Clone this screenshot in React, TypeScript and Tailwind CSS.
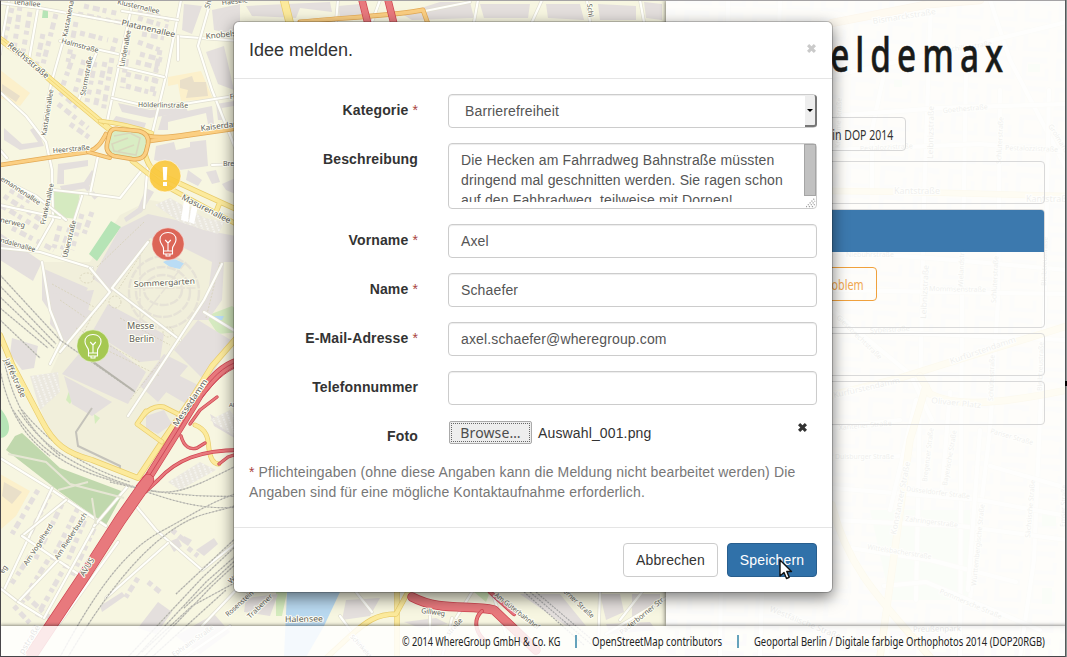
import React from "react";

type Label = [text: string, x: number, y: number, rotate: number, size?: number, length?: number];

const detached = [
  "M12 8 L4 42", "M20 6 L14 50", "M30 12 L22 58", "M43 34 L36 66", "M56 14 L42 68", "M78 14 L122 23", "M84 6 L120 14",
  "M76 22 L68 62", "M80 33 L108 40", "M74 54 L62 88", "M84 60 L74 96", "M95 62 L87 102", "M105 62 L95 108",
  "M112 58 L103 112", "M116 38 L112 52", "M128 50 L122 88", "M138 42 L160 50", "M140 54 L162 60", "M136 62 L160 68",
  "M126 74 L160 82", "M126 86 L156 94", "M160 50 L152 92", "M138 10 L170 20", "M138 18 L168 27", "M142 34 L164 38",
  "M60 92 L80 110", "M58 104 L88 128", "M70 124 L90 138", "M4 196 L44 222", "M2 206 L38 228", "M12 228 L54 250",
  "M60 226 L54 248", "M70 228 L62 250", "M82 214 L72 250", "M92 212 L84 234", "M86 186 L98 200", "M10 190 L34 204",
  "M38 490 L12 534", "M50 494 L28 538", "M62 504 L34 562", "M78 508 L52 560", "M88 512 L64 570", "M98 520 L72 576",
  "M30 556 L10 586", "M48 560 L22 602", "M62 572 L36 618", "M14 606 L40 634", "M26 596 L52 620",
  "M148 582 L160 592", "M138 578 L124 600", "M172 530 L186 542", "M188 548 L198 556",
];

const blocks = [
  "M206 52 L224 46 L234 90 L218 84Z", "M212 10 L240 4 L240 36 L214 30Z", "M184 4 L202 6 L192 34 L182 30Z",
  "M118 103 L150 110 L186 107 L188 112 L150 118 L122 112Z", "M162 116 L212 106 L214 124 L208 124 L206 113 L168 122 L168 130 L158 130Z",
  "M116 116 L146 123 L144 129 L112 122Z", "M218 120 L216 104 L240 100 L240 105 L222 108 L224 120Z",
  "M156 146 L174 142 L176 150 L190 147 L190 142 L206 140 L208 166 L180 170 L168 164 L154 160Z",
  "M58 164 L88 160 L88 166 L64 170 L64 184 L57 184Z", "M60 186 L84 182 L92 170 L96 174 L88 188 L62 192Z",
  "M4 128 L22 144 L38 142 L30 130 L36 126 L44 146 L20 150 L4 140Z", "M188 170 L202 180 L198 186 L186 180Z",
  "M206 172 L216 170 L220 182 L212 184Z", "M222 184 L240 176 L240 196 L226 190Z", "M146 188 L154 192 L142 212 L126 222 L124 218 L138 208Z",
  "M0 233 L42 262 L33 281 L0 260Z", "M120 228 L148 214 L176 220 L204 230 L236 236 L240 262 L224 262 L222 300 L208 320 L190 320 L208 294 L212 262 L184 248 L150 238 L144 248 L112 292 L92 278Z",
  "M42 268 L88 288 L78 306 L94 312 L68 334 L50 312 L42 300Z", "M52 294 L94 290 L84 324 L66 342 L50 324Z",
  "M108 304 L164 334 L160 360 L140 362 L92 332Z", "M198 320 L234 342 L206 382 L174 350Z", "M82 350 L110 344 L146 372 L128 404 L62 374Z",
  "M12 338 L38 346 L34 368 L22 370 L10 354Z", "M164 354 L188 366 L158 402 L140 386Z", "M64 376 L112 402 L92 416 L72 404Z",
  "M172 372 L200 386 L190 406 L166 392Z", "M158 602 L172 612 L156 634 L138 628Z", "M100 606 L122 592 L125 596 L102 612Z",
  "M168 542 L178 538 L182 546 L174 552Z", "M184 536 L192 540 L188 546 L182 542Z", "M196 550 L214 538 L218 544 L204 556Z",
  "M210 414 L240 432 L238 440 L214 426Z", "M146 416 L164 410 L172 424 L158 434 L146 428Z",
  "M246 6 L330 2 L332 12 L300 8 L296 18 L252 16Z", "M338 6 L360 4 L362 16 L340 18Z", "M402 14 L440 2 L470 2 L474 18 L412 20Z",
  "M480 4 L530 4 L528 18 L484 18Z", "M546 4 L580 4 L584 20 L548 18Z", "M598 4 L636 6 L636 20 L600 20Z", "M644 2 L662 4 L662 20 L646 18Z",
  "M246 598 L278 594 L270 616 L244 612Z", "M346 600 L380 598 L370 616 L342 620Z", "M404 622 L436 618 L448 624 L420 628Z",
  "M520 594 L560 594 L586 626 L566 626Z", "M600 594 L620 594 L624 612 L606 620Z", "M632 594 L660 594 L660 604 L632 618Z",
  "M606 624 L650 622 L656 630 L610 634Z", "M176 636 L214 614 L230 632 L200 654Z",
];

const streets = [
  "M9 0 L2 40 L0 54", "M38 8 L29 60", "M73 0 L62 45 L51 84 L42 137", "M0 3 L40 8 L122 23 L174 36 L240 41",
  "M60 41 L118 54", "M96 54 L77 104", "M133 0 L107 122", "M181 0 L166 76 L152 134", "M211 0 L198 46 L212 90 L240 160",
  "M118 66 L164 77", "M112 98 L150 107 L190 103 L240 95", "M178 36 L178 60", "M122 11 L178 20", "M0 92 L26 116 L46 142 L52 170 L53 220 L36 250",
  "M0 150 L7 158", "M0 178 L36 196 L66 220", "M98 156 L90 194 L54 190", "M90 194 L120 198 L142 170", "M82 196 L62 258",
  "M0 205 L60 218", "M0 248 L40 252 L92 268", "M148 162 L144 208", "M240 164 L212 165", "M42 262 L50 310 L62 340 L50 364",
  "M90 268 L110 292 L60 352", "M148 242 L112 288 L180 340", "M222 264 L204 300 L178 340 L128 416", "M204 312 L240 334",
  "M0 458 L52 490 L106 526", "M52 488 L4 590", "M66 500 L22 536", "M22 536 L78 574", "M58 560 L18 602 L0 588", "M18 602 L44 618",
  "M98 520 L44 618", "M128 486 L94 526", "M136 506 L156 530 L202 570 L240 540", "M168 543 L106 598", "M118 542 L58 625",
  "M240 586 L202 626", "M356 592 L372 612", "M472 592 L456 618", "M492 592 L502 622 L508 640", "M600 592 L598 650", "M666 598 L606 634",
  "M338 0 L336 22", "M380 0 L372 22", "M478 0 L474 22", "M542 0 L532 22", "M587 0 L590 22", "M640 0 L644 22",
  "M420 12 L470 2", "M642 592 L620 620", "M230 626 L180 660", "M430 616 L430 657", "M452 618 L442 657", "M340 616 L370 657",
];

const rails = [
  "M0 275 L60 340 L135 392", "M0 286 L56 344", "M0 297 L54 348", "M0 308 L48 348", "M0 320 L40 358",
  "M13 410 C38 450 68 468 110 480 S190 512 240 507", "M18 410 C42 446 70 464 120 482 S180 494 240 464",
  "M22 410 C46 440 80 466 130 482", "M110 482 C150 492 190 498 240 496", "M60 657 C96 590 126 550 160 532 S204 505 240 492",
  "M68 657 C104 596 136 556 168 533 S210 515 240 504", "M128 657 L202 578 L240 542", "M136 657 L206 582 L240 552",
  "M144 657 L212 586 L240 560", "M152 657 L226 590", "M142 652 L192 606 L240 580", "M176 594 L240 534", "M184 608 L240 556", "M0 370 C10 420 30 440 50 456",
  "M4 360 C14 410 36 436 60 456",
];

const paleStreets = [
  "M728 0 L720 657", "M780 0 L760 657", "M887 60 L872 130 L872 190", "M931 0 L924 200 L916 600", "M966 70 L962 300 L960 657",
  "M990 0 L1010 60 L1067 170", "M1000 90 L998 300 L990 430 L970 600", "M1049 90 L1045 300 L1034 560 L1020 657", "M832 116 L940 108 L1067 104",
  "M832 150 L980 144 L1067 152", "M832 76 L960 48 L1067 22", "M832 252 L930 258 L1067 270", "M832 290 L1067 294", "M832 310 L910 374 L932 420",
  "M832 330 L930 334 L1067 340", "M832 428 L900 420", "M832 458 L910 456", "M832 488 L980 500 L1067 516", "M832 520 L960 526 L1067 540",
  "M850 548 L930 560 L1016 582", "M884 586 L926 582 L1040 630", "M916 400 L890 510", "M950 392 L942 490", "M980 430 L968 590", "M990 466 L1067 488",
];

const labels: Label[] = [
  ["tenallee", 14, 4, 6, 7], ["Kastaniena", 67, 37, -79, 7], ["Klusternallee", 117, 4, 13, 7], ["Platanenallee", 121, 25, 13, 8, 55],
  ["Halmstraße", 61, 43, 15, 7, 38], ["Stormstraße", 85, 96, -79, 7, 40], ["Lindenallee", 124, 67, -79, 7, 37],
  ["Reichsstraße", 7, 46, 40, 8, 51], ["Kastanienallee", 46, 136, -81, 7, 47], ["Heerstraße", 53, 153, -5, 7, 37],
  ["Hölderlinstraße", 138, 107, 1, 7, 50], ["Kaiserdamm", 201, 131, -7, 8, 48], ["Knobelsdorff", 206, 39, -6, 8, 49], ["Haesele", 222, 5, -6, 7],
  ["Sh", 209, 9, -72, 7], ["Fr", 230, 99, -5, 7], ["Bre", 223, 166, 0, 7], ["Masurenallee", 181, 199, 27, 8, 54],
  ["emannenallee", 0, 180, 33, 7, 46], ["Frankenallee", 45, 225, -78, 7, 42], ["nerweg", 0, 222, 13, 7, 25],
  ["ndalenallee", 0, 242, 16, 7, 36], ["Ubierstraße", 67, 258, -76, 7, 38], ["Sommergarten", 134, 287, -3, 8, 61],
  ["Messe", 127, 329, 0, 8, 27], ["Berlin", 129, 342, 0, 8, 25], ["Jafféstraße", 4, 360, 66, 8, 42],
  ["Messedamm", 177, 427, -56, 8, 55], ["AVUS", 84, 577, -58, 8, 20], ["Am Vogelherd", 27, 566, -57, 7, 48],
  ["Am Riederbusch", 58, 560, -57, 7, 54], ["eg", 3, 574, -55, 7], ["Al", 229, 407, 0, 6], ["We", 231, 584, -45, 7],
  ["Rosenstein", 228, 617, -42, 7, 35], ["Trabener", 250, 619, -44, 7, 32], ["Halensee", 285, 622, -1, 8, 38], ["Gillweg", 421, 613, 7, 7, 24],
  ["straße", 449, 636, -48, 7], ["Am Güterbahnhof", 494, 596, 38, 7, 55], ["erner Straße", 563, 592, 43, 7, 39], ["Paderborner Str", 622, 635, -39, 7, 54],
  ["Schl", 587, 4, 83, 7], ["pstraße", 23, 655, -58, 8, 33], ["Ephraim-Straße", 174, 657, -35, 7, 49], ["Schinkelstraße", 350, 637, 48, 6],
  ["Bismarckstraße", 873, 24, -9, 8, 64], ["Schillerstraße", 948, 52, -8, 7], ["Goethestraße", 943, 113, -5, 7, 45],
  ["Leibnizstraße", 933, 159, -89, 8, 53], ["Schlüterstraße", 1001, 164, -87, 7, 47], ["Grolmanstraße", 1048, 126, 58, 7],
  ["Pestalozzistraße", 860, 151, -3, 7, 53], ["Pestalozzistraße", 1005, 150, 2, 7, 53], ["Kantstraße", 894, 194, 0, 8, 46],
  ["Kantstraße", 1026, 202, 0, 8, 46], ["Krumme Straße", 840, 148, -88, 7, 50], ["Niebuhrstraße", 846, 257, 0, 7, 48],
  ["Leibnizstraße", 926, 319, -87, 8, 54], ["Wielandstraße", 963, 288, -88, 7, 48], ["Schlüterstraße", 996, 303, -87, 7, 47],
  ["Mommsenstraße", 929, 291, 1, 7, 57], ["Bleibtreustraße", 1046, 286, -88, 7, 49], ["Giesebrechtstraße", 836, 318, 44, 7, 60],
  ["Sybelstraße", 870, 333, -3, 7, 40], ["Kurfürstendamm", 951, 364, -19, 8, 69], ["Kurfürstendamm", 834, 398, -13, 8, 68],
  ["Olivaer Platz", 931, 403, 6, 8, 50], ["Schlüterstraße", 993, 401, -88, 7, 46], ["Bleibtreustraße", 1042, 391, -88, 7, 49],
  ["Xantener Straße", 839, 430, -5, 7, 53], ["Pariser Straße", 990, 433, 16, 7, 44], ["Duisburger Straße", 835, 459, 0, 7, 59],
  ["Konstanzer Straße", 896, 535, -79, 8, 74], ["Bregenzer Straße", 927, 482, -83, 7, 54], ["Bayerische Straße", 947, 486, -80, 7, 56],
  ["Düsseldorfer Straße", 906, 491, 7, 7, 64], ["Zähringerstraße", 905, 521, 7, 7, 53], ["Sächsische Straße", 1030, 538, -85, 7, 58],
  ["Württembergische Straße", 976, 586, -84, 7, 82], ["Wittelsbacherstraße", 867, 549, 9, 7, 65], ["Pommersche Straße", 939, 593, 23, 7, 67],
  ["Emser Straße", 1065, 527, -88, 7, 42], ["Preußenpark", 913, 632, -1, 8, 48], ["Westfälische Straße", 769, 611, 22, 8, 76],
];

function Road({ d, width, fill, edge }: { d: string; width: number; fill: string; edge: string }) {
  return (
    <g fill="none" strokeLinejoin="round" strokeLinecap="round">
      <path d={d} stroke={edge} strokeWidth={width + 1.4} />
      <path d={d} stroke={fill} strokeWidth={width} />
    </g>
  );
}

function Bulb({ x, y, color }: { x: number; y: number; color: string }) {
  return (
    <g transform={`translate(${x} ${y})`}>
      <circle r="16.2" fill={color} stroke="#fff" strokeOpacity=".5" />
      <g fill="none" stroke="#fff" strokeWidth="1.1" strokeLinejoin="round">
        <path d="M-4.5 7 V4.5 C-4.5 1.5 -8 0 -8 -4.2 C-8 -9 -4.5 -11.5 0 -11.5 S8 -9 8 -4.2 C8 0 4.5 1.5 4.5 4.5 V7Z" />
        <path d="M-4.5 7 V10 H4.5 V7 M-2 10.5 V12 H2 V10.5 M0 7 V-1 M-2.8 -4 L0 -1 L2.8 -4" />
      </g>
    </g>
  );
}

function CityMap() {
  const yellow = { fill: "#fcea9c", edge: "#e9cd6d" };
  const orange = { fill: "#fbcf83", edge: "#e4aa55" };
  const red = { fill: "#e8797d", edge: "#cf4450" };
  return (
    <svg className="absolute inset-0" width="1067" height="657" viewBox="0 0 1067 657">
      <defs>
        <pattern id="courtyards" width="34" height="29" patternUnits="userSpaceOnUse" patternTransform="rotate(3)">
          <path d="M4 3 H29 V9 H22 V8 H9 V22 H27 V14 H31 V26 H4Z" fill="#ebe8e3" />
        </pattern>
        <pattern id="parking" width="5" height="5" patternUnits="userSpaceOnUse" patternTransform="rotate(-20)">
          <path d="M2 0 V4" stroke="#fff" strokeWidth="1" strokeDasharray="2 1" />
        </pattern>
      </defs>
      <rect width="1067" height="657" fill="#f7f6e1" />
      <path d="M42 262 L90 262 L120 215 L150 200 L240 215 V334 L200 384 L140 474 L90 460 L50 440 L38 400 L60 352Z" fill="#f1efdb" />
      <g fill="#fcf0cb">
        <path d="M168 77 L201 71 L213 99 L181 101 L178 84 L168 86Z" />
        <path d="M0 70 L30 93 L20 106 L0 98Z" />
        <path d="M0 474 L30 491 L16 516 L0 530Z" />
      </g>
      <path d="M180 80 L192 76 L194 82 L206 82 L208 96 L186 98 L188 90 L180 88Z M4 482 L22 492 L12 504 L2 496Z M2 84 L20 96 L16 102 L2 92Z" fill="#e9dfc9" />
      <path d="M43 9 h5 v9 h-6Z M111 221 L121 227 L97 261 L89 254Z M0 408 C14 424 10 438 0 438Z" fill="#b6e4b6" />
      <path d="M54 190 L80 192 L76 219 L52 216Z M206 316 L232 306 L240 312 V332 L218 334Z" fill="#d5eac0" />
      <path d="M6 450 L15 436 L22 433 L60 468 L124 492 L106 525 L60 492Z" fill="#c0d8ad" />
      <path d="M163 262 L172 258 L184 263 L180 269 L170 267Z M212 316 L224 316 L222 320 L214 320Z" fill="#b9dcf5" />
      <path d="M287 592 H340 L324 626 L306 657 H284Z" fill="#b9d9f0" />
      <path d="M276 592 H287 L282 616 H276Z M474 592 L490 592 L486 602Z M70 388 l6 6 l-6 10 l-4 -4Z M94 414 l6 4 l-5 6Z" fill="#d5ecbe" />

      <g fill="#e4dfdd">{blocks.map((d) => <path key={d} d={d} />)}</g>
      <g fill="none" stroke="#e4dfdd" strokeWidth="5" strokeDasharray="5 4 7 3 4 5">
        {detached.map((d) => <path key={d} d={d} />)}
      </g>
      <path d="M155 205 L170 198 L205 218 L225 222 L218 234 L180 222Z M30 376 L58 372 L60 392 L40 410Z M168 482 L200 462 L216 470 L180 490Z M210 420 L230 410 L240 424 V440Z" fill="#ebe8df" />
      <path d="M155 205 L170 198 L205 218 L225 222 L218 234 L180 222Z M30 376 L58 372 L60 392 L40 410Z M168 482 L200 462 L216 470 L180 490Z M210 420 L230 410 L240 424 V440Z" fill="url(#parking)" />
      <path d="M184 200 L190 202 L188 222 L181 220Z M192 204 L198 206 L194 224 L189 222Z" fill="#fff" />

      <g fill="none" stroke="#e6e2d6" strokeWidth="2.4" strokeDasharray="9 1.5">
        <ellipse cx="163" cy="290" rx="19" ry="15" /><ellipse cx="163" cy="292" rx="27" ry="25" />
        <ellipse cx="164" cy="292" rx="35" ry="36" /><path d="M140 256 V330 M186 262 L142 318 M134 288 H196" strokeWidth="1.4" />
      </g>
      <g fill="none" stroke="#d6d0b8" strokeWidth=".8" strokeDasharray="2 1.5">
        <path d="M52 284 L96 308 L80 340 M60 300 L86 318 M144 222 L96 268 M150 240 L118 290 M106 300 L62 350 M120 318 L170 345 M160 362 L130 400 M94 344 L160 376 M204 300 L174 344 M220 262 L206 318 M76 328 L140 362" />
        <ellipse cx="87" cy="278" rx="7" ry="5" /><circle cx="168" cy="332" r="5" /><circle cx="115" cy="302" r="6" />
      </g>

      {streets.map((d) => <Road key={d} d={d} width={2.2} fill="#fffffb" edge="#e2e0d2" />)}
      <g fill="none">
        <path d="M8 454 L46 462 L70 484 L124 498 M58 490 L88 482 M92 498 L96 524" stroke="#e6e6d4" strokeWidth="2" />
        <path d="M92 408 L76 432 L78 446 L120 466 V472" stroke="#c4c2ba" strokeWidth="2" />
        {rails.map((d) => (
          <g key={d}><path d={d} stroke="#cfcec4" strokeWidth="1.2" /><path d={d} stroke="#adada7" strokeWidth="1.1" strokeDasharray="1.5 2" /></g>
        ))}
        <path d="M92 361 L134 391" stroke="#b5b3aa" strokeWidth="1.8" />
        <path d="M524 592 L584 645 M530 592 L592 645 M536 592 L604 650" stroke="#aaa" strokeWidth="1.2" strokeDasharray="2 1" />
      </g>

      <Road d="M0 39 L28 60 L52 81 L102 123 L112 131" width={5} {...yellow} />
      <path d="M0 38 L52 81 L104 125" stroke="#f3d876" strokeWidth="1" fill="none" />
      <Road d="M100 121 C120 123 138 128 152 133" width={3} {...yellow} />
      <Road d="M132 161 L160 183 L186 197 L240 226" width={3.5} {...yellow} />
      <Road d="M145 154 C148 166 152 172 170 179 L240 211 M220 202 L216 212" width={4} {...yellow} />
      <Road d="M0 335 L12 364 L42 421 C54 444 66 453 92 460 L138 478 L162 442 L192 398 L212 366 L240 334" width={4.5} {...yellow} />
      <Road d="M140 420 C146 410 155 405 164 407 L182 416 M146 411 L137 424 L162 442" width={3.5} {...yellow} />
      <Road d="M195 425 C208 430 208 440 209 449 C210 457 213 464 219 464" width={3.5} {...yellow} />
      <Road d="M0 165 L46 158 L88 152 C98 149 102 141 106 134" width={3.2} {...orange} />
      <Road d="M88 152 L110 158" width={2.5} {...orange} />
      <Road d="M148 136 C164 140 190 133 240 127 M150 141 L240 128" width={3.2} {...orange} />
      <path d="M118 129 L139 131 C147 133 149 138 148 144 L146 152 C144 158 139 160 132 159 L114 156 C108 154 106 150 107 144 L109 136 C110 130 113 128 118 129Z" fill="#d9edc4" stroke="#dda451" strokeWidth="4.6" />
      <path d="M118 129 L139 131 C147 133 149 138 148 144 L146 152 C144 158 139 160 132 159 L114 156 C108 154 106 150 107 144 L109 136 C110 130 113 128 118 129Z" fill="none" stroke="#fbcf83" strokeWidth="3.1" />
      <path d="M114 136 L130 133 L140 138 L136 155 L114 151 L112 144 L128 138 M118 151 L134 145" fill="none" stroke="#d9d8bd" strokeWidth="1.6" />

      <Road d="M181 436 C184 447 190 450 197 448 L205 443" width={2} {...red} />
      <Road d="M240 450 C200 450 176 460 158 480 L145 492" width={2.4} {...red} />
      <Road d="M219 464 L228 457 L240 453" width={2} {...red} />
      <Road d="M240 361 C222 366 212 379 200 394 L178 430 L148 478" width={7.5} {...red} />
      <path d="M240 361 C222 366 212 379 200 394 L178 430 L148 478 M240 366 C224 371 213 384 202 398" stroke="#cf4858" strokeWidth="1" fill="none" />
      <Road d="M217 397 L200 410 L190 424" width={2} {...red} />
      <Road d="M148 480 L120 520 L84 576 L28 660" width={11} {...red} />
      <path d="M148 472 L136 486" stroke="#d84e5c" strokeWidth="1" fill="none" />

      <Road d="M284 0 L290 24" width={7} {...yellow} />
      <Road d="M300 22 C340 18 400 15 423 10 L428 24" width={3.5} {...orange} />
      <Road d="M362 0 L368 24 M388 0 L394 24" width={6} {...red} />
      <Road d="M397 592 V657" width={4} {...yellow} />
      <Road d="M408 592 L396 614 C376 614 366 622 350 636 L324 660" width={4} {...yellow} />
      <Road d="M412 597 C440 612 470 604 494 610 L536 650" width={8} {...red} />
      <Road d="M482 611 C474 618 474 630 484 640" width={2.5} {...red} />
      <Road d="M490 592 L514 614" width={3} {...red} />

      <rect x="666" width="401" height="657" fill="url(#courtyards)" />
      <path d="M870 510 H970 V600 H890Z M894 80 h8 v7 h-8Z M1028 64 h12 v8 h-12Z M1042 514 h14 v12 h-14Z M1042 588 h10 v16 h-10Z" fill="#d8edcd" />
      {paleStreets.map((d) => <Road key={d} d={d} width={4} fill="#fffffb" edge="#e5e2d3" />)}
      <Road d="M832 23 L930 4 L980 0" width={7} {...orange} />
      <Road d="M832 191 L910 192 L1067 196" width={5} {...yellow} />
      <Road d="M820 398 L900 378 L970 356 L1067 326" width={6} {...yellow} />
      <Road d="M920 376 L930 394 C950 404 980 408 1067 390 M926 386 L910 440 L880 657 M832 505 C846 565 880 600 930 657" width={6} {...yellow} />

      <g fontFamily="'Noto Sans', sans-serif" fill="#605e58" stroke="#fffff4" strokeWidth="2" strokeLinejoin="round" paintOrder="stroke">
        {labels.map(([text, x, y, rotate, size = 7, length]) => (
          <text key={`${text}-${x}-${y}`} fontSize={size} transform={`translate(${x} ${y}) rotate(${rotate})`} textLength={length} lengthAdjust="spacingAndGlyphs">{text}</text>
        ))}
      </g>

      <circle cx="165" cy="176" r="16" fill="#fac83c" fillOpacity=".9" stroke="#fff" strokeOpacity=".6" />
      <path d="M162.7 167 H167.3 L166.7 180 H163.3Z M163 182 H167 V186 H163Z" fill="#fff" />
      <Bulb x={168} y={244} color="#dc6557" />
      <Bulb x={93} y={346} color="#a5c852" />
    </svg>
  );
}

function Field({ label, required, children, tall }: { label: string; required?: boolean; children: React.ReactNode; tall?: boolean }) {
  return (
    <div className={tall ? "mb-[15px] flex h-[66px]" : "mb-[15px] flex h-[34px]"}>
      <div className="w-[169px] shrink-0 pt-[6px] text-right leading-5 font-bold text-[#333]">
        {label}{required && <span className="font-normal text-[#a94442]"> *</span>}
      </div>
      <div className="ml-[30px] w-[369px]">{children}</div>
    </div>
  );
}

const control = "flex h-[34px] items-center rounded border border-[#ccc] bg-white px-3 text-[#555] shadow-[inset_0_1px_1px_rgba(0,0,0,0.075)]";

function Cross({ className, size }: { className: string; size: number }) {
  return (
    <svg className={className} width={size} height={size} viewBox="0 0 10 10">
      <path d="M2.4 0 L5 2.6 L7.6 0 L10 2.4 L7.4 5 L10 7.6 L7.6 10 L5 7.4 L2.4 10 L0 7.6 L2.6 5 L0 2.4Z" fill="currentColor" />
    </svg>
  );
}

function IdeaDialog() {
  return (
    <div className="flex h-[572px] w-[600px] flex-col rounded-md border border-black/20 bg-white bg-clip-padding text-[14px] tracking-[0.14px] shadow-[0_5px_15px_rgba(0,0,0,0.5)]">
      <header className="flex h-[57px] shrink-0 items-start justify-between border-b border-[#e5e5e5] px-[15px] pt-[15px]">
        <h4 className="text-[18px] leading-[26px] tracking-normal text-[#333]">Idee melden.</h4>
        <Cross className="mt-[7px] mr-px text-[#cacaca]" size={9} />
      </header>
      <div className="h-[448px] shrink-0 px-[15px] pt-[15px]">
        <Field label="Kategorie" required>
          <div className="relative">
            <div className={control}><span className="pl-1">Barrierefreiheit</span></div>
            <div className="absolute top-px right-0 flex h-8 w-3 items-center justify-center rounded-r-[3px] border-r-2 border-b-2 border-[#777] bg-[#eee]">
              <svg width="6" height="3" viewBox="0 0 6 3"><path d="M0 0 H6 L3 3Z" fill="#000" /></svg>
            </div>
          </div>
        </Field>
        <Field label="Beschreibung" tall>
          <div className="relative h-[66px] rounded border border-[#ccc] pt-[6px] pl-3 leading-5 text-[#555] shadow-[inset_0_1px_1px_rgba(0,0,0,0.075)]">
            <div className="h-[52px] overflow-hidden whitespace-nowrap">
              Die Hecken am Fahrradweg Bahnstraße müssten<br />dringend mal geschnitten werden. Sie ragen schon<br />auf den Fahhradweg, teilweise mit Dornen!
            </div>
            <div className="absolute top-0 right-0 h-[52px] w-3 border border-[#a5a5a5] bg-[#c1c1c1]" />
            <svg className="absolute right-0 bottom-0" width="10" height="10" viewBox="0 0 10 10">
              <path d="M0 9 L9 0 M3 9 L9 3 M6 9 L9 6" stroke="#999" strokeWidth="1.2" strokeDasharray="1.2 1.4" />
            </svg>
          </div>
        </Field>
        <Field label="Vorname" required><div className={control}>Axel</div></Field>
        <Field label="Name" required><div className={control}>Schaefer</div></Field>
        <Field label="E-Mail-Adresse" required><div className={control}>axel.schaefer@wheregroup.com</div></Field>
        <Field label="Telefonnummer"><div className={control} /></Field>
        <Field label="Foto">
          <div className="flex items-start">
            <div className="mt-px ml-px h-[23px] w-[83px] rounded-[2px] border border-[#aaa] bg-[#eee] p-px">
              <div className="flex h-full items-center justify-center border border-dotted border-[#666] font-['Noto_Sans',sans-serif] text-[14px] leading-none text-[#4c4c4c]">Browse…</div>
            </div>
            <span className="mt-[3px] ml-[6px] leading-5 text-[#333]">Auswahl_001.png</span>
            <Cross className="mt-[3px] mr-[10px] ml-auto text-[#333]" size={9} />
          </div>
        </Field>
        <p className="-mt-[7px] leading-5 text-[#777]"><span className="text-[#a94442]">*</span> Pflichteingaben (ohne diese Angaben kann die Meldung nicht bearbeitet werden) Die Angaben sind für eine mögliche Kontaktaufnahme erforderlich.</p>
      </div>
      <footer className="flex flex-1 items-start justify-end border-t border-[#e5e5e5] px-[15px] pt-[15px]">
        <button className="h-[34px] w-[95px] rounded border border-[#ccc] bg-white text-[#333]">Abbrechen</button>
        <button className="relative ml-[9px] h-[34px] w-[90px] rounded border border-[#285e8e] bg-[#3071a9] text-white">
          Speichern
          <svg className="absolute top-[15px] left-[51px]" width="15" height="21" viewBox="0 0 15 21">
            <path d="M1 1 V17 L5 13.5 L7.5 19.5 L10.2 18.3 L7.8 12.5 H12.5Z" fill="#fff" stroke="#111" strokeWidth="1.4" strokeLinejoin="round" />
          </svg>
        </button>
      </footer>
    </div>
  );
}

const condensed = "inline-block whitespace-nowrap font-['Noto_Sans',sans-serif]";

export default function App() {
  return (
    <div className="relative h-[657px] w-[1067px] overflow-hidden bg-[#f7f6e1] font-['Liberation_Sans',Arial,sans-serif]">
      <CityMap />
      <div className="relative flex h-full flex-col">
        <div className="flex h-[626px] justify-end">
          <aside className="w-[401px] bg-[#fefefd]/90 pr-[22px] shadow-[0_0_5px_rgba(0,0,0,0.7)]">
            <div className="flex h-[117px] justify-end pt-[18px]">
              <h1 className={`${condensed} mr-[36px] origin-right scale-x-[0.71] text-[47px] leading-[72px] font-medium tracking-[8.5px] text-[#191b19] [-webkit-text-stroke:0.5px_#191b19]`}>eldemax</h1>
            </div>
            <div className="mr-[139px] flex h-[34px] items-center justify-end rounded border border-[#d8d8d8] pr-3 text-[14px] text-[#333]">
              <span className={`${condensed} origin-right scale-x-[0.75]`}>in DOP 2014</span>
            </div>
            <div className="mt-[10px] h-[43px] rounded border border-[#d9d9d9]" />
            <div className="mt-[5px] h-[119px] overflow-hidden rounded border border-[#d9d9d9]">
              <div className="h-[42px] bg-[#3071a9]/94" />
              <div className="mt-[15px] mr-[167px] flex h-[34px] items-center justify-end rounded border border-[#f0a13c] pr-3 text-[15px] text-[#f0a750]">
                <span className={`${condensed} origin-right scale-x-[0.72]`}>oblem</span>
              </div>
            </div>
            <div className="mt-[5px] h-[43px] rounded border border-[#d9d9d9]" />
            <div className="mt-[5px] h-[44px] rounded border border-[#d9d9d9]" />
          </aside>
        </div>
        <footer className="flex h-[31px] items-center justify-end bg-white/84 pr-[22px] text-[12px] text-[#222] shadow-[0_0_4px_rgba(0,0,0,0.65)]">
          <div className="w-[158px]"><span className={`${condensed} origin-left scale-x-[0.763]`}>© 2014 WhereGroup GmbH &amp; Co. KG</span></div>
          <div className="mx-[15px] h-[13px] w-[2px] bg-[#65a3bc]" />
          <div className="w-[130px]"><span className={`${condensed} origin-left scale-x-[0.8]`}>OpenStreetMap contributors</span></div>
          <div className="mx-[15px] h-[13px] w-[2px] bg-[#65a3bc]" />
          <div className="w-[291px]"><span className={`${condensed} origin-left scale-x-[0.786]`}>Geoportal Berlin / Digitale farbige Orthophotos 2014 (DOP20RGB)</span></div>
        </footer>
      </div>
      <div className="absolute inset-0 flex items-start pt-[21px] pl-[233px]"><IdeaDialog /></div>
      <div className="pointer-events-none absolute inset-0 border-t border-b border-l border-t-[#a5a3a5] border-b-[#454548] border-l-[#49474a]" />
      <div className="pointer-events-none absolute top-0 right-0 h-full w-[2px] border-l border-[#555a5c] bg-[#8d9494]" />
      <div className="absolute top-[381px] right-0 h-[5px] w-[2px] bg-black" />
    </div>
  );
}
